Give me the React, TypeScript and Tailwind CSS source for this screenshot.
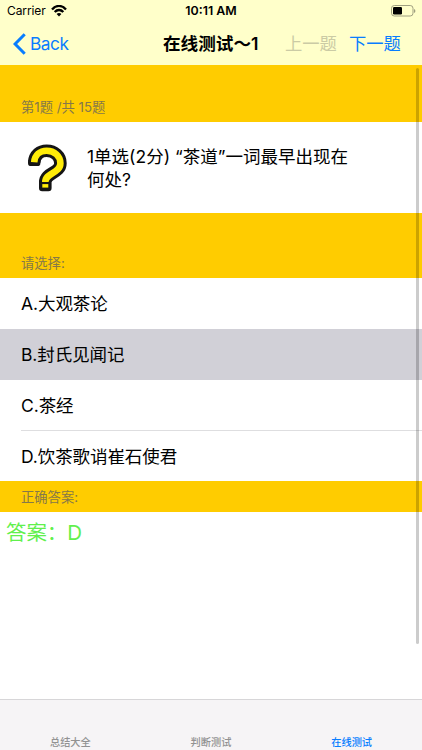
import React from "react";

const options = ["A.大观茶论", "B.封氏见闻记", "C.茶经", "D.饮茶歌诮崔石使君"];

function StatusBar() {
  return (
    <div className="grid h-[22px] grid-cols-3 items-center pl-[6px] pr-[6px] text-[12px] leading-[22px]">
      <div className="flex items-center gap-[5px] pl-px">
        <span className="tracking-[-0.1px]">Carrier</span>
        <svg width="16" height="12" viewBox="0 0 16 12" fill="none" stroke="#000" strokeWidth="2.3">
          <path d="M1 4.4C5-.2 11-.2 15 4.4" />
          <path d="M3.7 7.1c2.5-2.8 6.1-2.8 8.6 0" />
          <path d="M8 11.4 5.6 8.9c1.4-1.3 3.4-1.3 4.8 0z" fill="#000" stroke="none" />
        </svg>
      </div>
      <span className="text-center text-[12.4px] font-semibold">10:11 AM</span>
      <svg className="justify-self-end" width="25" height="12" viewBox="0 0 25 12">
        <rect x=".5" y=".5" width="21.5" height="10.5" rx="2.8" fill="none" stroke="#a0a080" />
        <rect x="2" y="2" width="9" height="7.5" rx="1.2" />
        <path d="M23.2 4v4c1.5-.6 1.5-3.4 0-4z" fill="#88886e" />
      </svg>
    </div>
  );
}

function NavBar() {
  return (
    <div className="flex h-[43px] items-center pl-[13px] text-[17.3px] leading-[43px]">
      <div className="flex w-[150px] items-center gap-[4px] text-[#087dff]">
        <svg width="13" height="22" viewBox="0 0 13 22" fill="none" stroke="currentColor" strokeWidth="3">
          <path d="M11.7 1.2 2.1 11l9.6 9.8" />
        </svg>
        <span className="tracking-[-0.5px]">Back</span>
      </div>
      <span className="w-[122px] whitespace-nowrap text-[17.6px] font-semibold">在线测试～1</span>
      <span className="w-[64px] text-[#cbcba5]">上一题</span>
      <span className="text-[#087dff]">下一题</span>
    </div>
  );
}

function QuestionIcon() {
  const hook = "M8.2 18.2C8.8 11 14 6.8 20.6 6.8C28.600 6.800 34.400 12.200 34.400 19.200C34.400 29.500 19.300 28.500 19.300 38";
  return (
    <svg width="41" height="48" viewBox="0 0 41 48" fill="none">
      <path d={hook} stroke="#151515" strokeWidth="12.600" />
      <path d="M5.200 18.200h6v.7h-6zM16.200 38h6.200v6h-6.200z" fill="#151515" stroke="#151515" strokeWidth="6.400" strokeLinejoin="round" />
      <path d={hook} stroke="#ffec08" strokeWidth="6.600" />
      <path d="M16.300 40.100h6v3.500h-6z" fill="#ffec08" />
    </svg>
  );
}

export default function App() {
  return (
    <div className="relative flex h-[750px] w-[422px] flex-col overflow-hidden bg-white font-['Inter','Noto_Sans_CJK_SC',sans-serif] text-black">
      <header className="h-[65px] bg-[#ffffca]">
        <StatusBar />
        <NavBar />
      </header>
      <div className="h-[57px] bg-[#ffcc00] pl-[21px] pt-[32px] text-[13.3px] leading-[20px] text-[#85784a]">第1题 /共 15题</div>
      <section className="flex h-[91px] items-center gap-[20px] pl-[26px]">
        <QuestionIcon />
        <p className="whitespace-nowrap text-[17.5px] leading-[23px]">1单选(2分) “茶道”一词最早出现在<br />何处?</p>
      </section>
      <div className="h-[65px] bg-[#ffcc00] pl-[21px] pt-[40px] text-[13.3px] leading-[20px] text-[#85784a]">请选择:</div>
      <ul className="h-[203px] text-[17.5px] leading-[52px] tracking-[-0.08px]">
        {options.map((option, i) => (
          <li key={option} className={i === 1 ? "h-[51px] bg-[#d1d0d7] pl-[21px]" : i === 2 ? "ml-[21px] h-[51px] border-b border-[#dedee0]" : i === 0 ? "h-[51px] pl-[21px]" : "h-[50px] pl-[21px]"}>{option}</li>
        ))}
      </ul>
      <div className="h-[31px] bg-[#ffcc00] pl-[21px] text-[13.3px] leading-[32px] text-[#85784a]">正确答案:</div>
      <div className="flex-1 pl-[6px] text-[20.5px] leading-[42px] tracking-[-0.1px] text-[#61f04c]">答案：D</div>
      <nav className="grid h-[51px] grid-cols-3 border-t border-[#d7d6d8] bg-[#f6f4f6] pt-[32px] text-center text-[10.2px] font-medium leading-[20px] text-[#929292]">
        <span>总结大全</span>
        <span>判断测试</span>
        <span className="text-[#087dff]">在线测试</span>
      </nav>
      <div className="absolute left-[415.5px] top-[68px] h-[576px] w-[3.5px] rounded-full bg-black/20" />
    </div>
  );
}
